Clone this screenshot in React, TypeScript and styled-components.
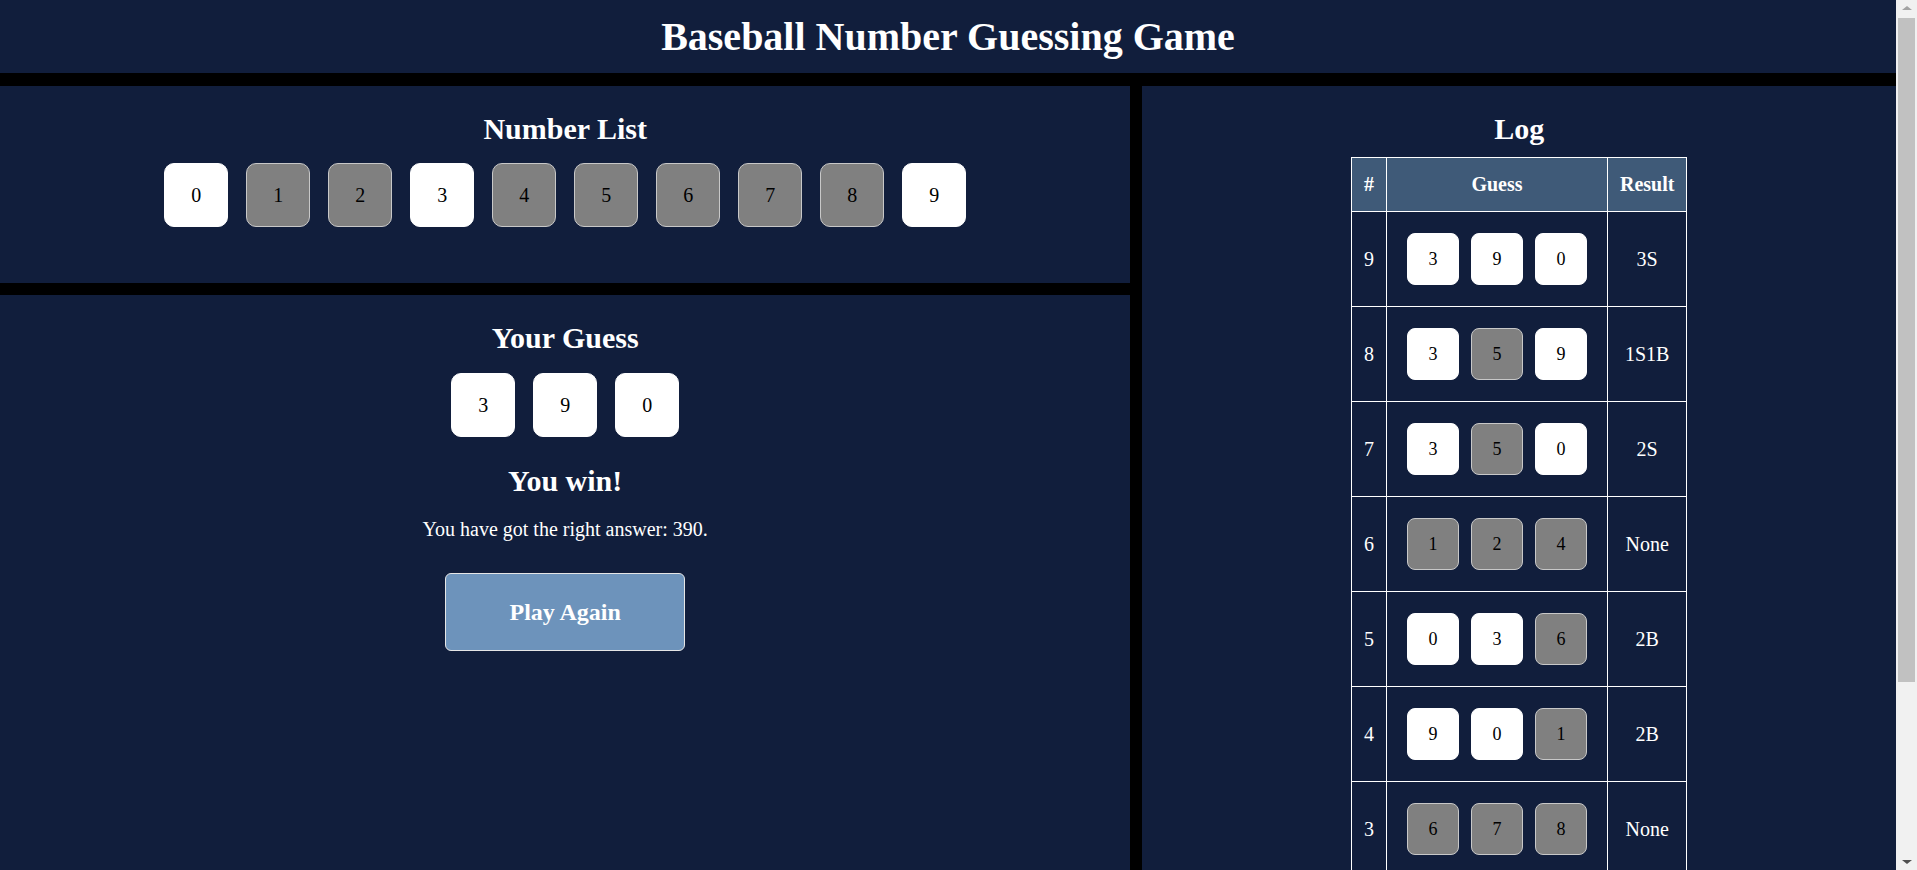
import React from 'react';
import styled, { createGlobalStyle } from 'styled-components';

const GlobalStyle = createGlobalStyle`
  body {
    margin: 0;
    background-color: #000;
    color: #fff;
    font-family: 'Liberation Serif', 'Times New Roman', serif;
  }
`;

const Page = styled.div`
  width: calc(100% - 21px);
`;

// stand-in for the browser's scrollbar seen in the screenshot
const ScrollTrack = styled.div`
  position: fixed;
  top: 0;
  right: 0;
  width: 21px;
  height: 100vh;
  display: flex;
  flex-direction: column;
  align-items: center;
  background-color: #f1f1f1;
`;

const ScrollArrow = styled.div<{ down?: boolean }>`
  width: 0;
  height: 0;
  margin: ${(p) => (p.down ? 'auto 0 6px' : '6px 0 0')};
  border-left: 5px solid transparent;
  border-right: 5px solid transparent;
  ${(p) =>
    p.down ? 'border-top: 4px solid #505050;' : 'border-bottom: 4px solid #a3a3a3;'}
`;

const ScrollThumb = styled.div`
  width: 17px;
  height: 664px;
  margin-top: 8px;
  background-color: #c1c1c1;
`;

const Header = styled.header`
  height: 73px;
  display: flex;
  justify-content: center;
  align-items: center;
  background-color: #111e3c;
  margin-bottom: 13px;
`;

const Title = styled.h1`
  margin: 0;
  font-size: 40px;
  font-weight: bold;
`;

const Main = styled.main`
  display: grid;
  grid-template-columns: 3fr 2fr;
  gap: 12px;
`;

const LeftColumn = styled.div`
  display: grid;
  grid-template-rows: 197px 1fr;
  gap: 12px;
`;

const Panel = styled.section`
  display: flex;
  flex-direction: column;
  align-items: center;
  background-color: #111e3c;
  padding: 26px 0 25px;
`;

const PanelTitle = styled.h2<{ gap?: number }>`
  margin: 0 0 ${(p) => p.gap ?? 18}px;
  font-size: 30px;
  line-height: 34px;
  font-weight: bold;
`;

const BoxRow = styled.div`
  display: flex;
  gap: 18px;
`;

const NumberBox = styled.div<{ used: boolean }>`
  box-sizing: border-box;
  width: 64px;
  height: 64px;
  display: flex;
  justify-content: center;
  align-items: center;
  border-radius: 10px;
  border: 1px solid ${(p) => (p.used ? '#fff' : '#c8c8c8')};
  background-color: ${(p) => (p.used ? '#fff' : '#808080')};
  color: #000;
  font-size: 20px;
`;

const WinTitle = styled.h2`
  margin: 27px 0 20px;
  font-size: 30px;
  line-height: 34px;
  font-weight: bold;
`;

const Message = styled.p`
  margin: 0 0 32px;
  font-size: 20px;
  line-height: 23px;
`;

const PlayButton = styled.button`
  box-sizing: border-box;
  width: 240px;
  height: 78px;
  border: 1px solid #e6e6e6;
  border-radius: 6px;
  background-color: #6d93bb;
  color: #fff;
  font-family: 'Liberation Serif', 'Times New Roman', serif;
  font-size: 24px;
  font-weight: bold;
  cursor: pointer;
`;

const LogTable = styled.table`
  border-collapse: collapse;
  font-size: 20px;
  margin-top: -7px;
`;

const HeadCell = styled.th`
  border: 1px solid #fff;
  padding: 15px 12px;
  background-color: #3f5a78;
  line-height: 23px;
`;

const Cell = styled.td<{ wide?: boolean }>`
  border: 1px solid #fff;
  padding: ${(p) => (p.wide ? '15px 14px' : '15px 12px')};
  text-align: center;
  line-height: 23px;
`;

const LogBoxes = styled.div`
  display: flex;
`;

const LogBox = styled.div<{ used: boolean }>`
  box-sizing: border-box;
  width: 52px;
  height: 52px;
  margin: 6px;
  display: flex;
  justify-content: center;
  align-items: center;
  border-radius: 8px;
  border: 1px solid ${(p) => (p.used ? '#fff' : '#c8c8c8')};
  background-color: ${(p) => (p.used ? '#fff' : '#808080')};
  color: #000;
  font-size: 18px;
`;

const answer = [3, 9, 0];

const history = [
  [3, 9, 0],
  [3, 5, 9],
  [3, 5, 0],
  [1, 2, 4],
  [0, 3, 6],
  [9, 0, 1],
  [6, 7, 8],
  [1, 2, 3],
  [4, 5, 6],
];

const judge = (guess: number[]) => {
  let strike = 0;
  let ball = 0;
  guess.forEach((n, i) => {
    if (answer[i] === n) strike++;
    else if (answer.includes(n)) ball++;
  });
  if (!strike && !ball) return 'None';
  return `${strike ? strike + 'S' : ''}${ball ? ball + 'B' : ''}`;
};

const App = () => {
  return (
    <Page>
      <GlobalStyle />
      <Header>
        <Title>Baseball Number Guessing Game</Title>
      </Header>
      <Main>
        <LeftColumn>
          <Panel>
            <PanelTitle gap={17}>Number List</PanelTitle>
            <BoxRow>
              {[0, 1, 2, 3, 4, 5, 6, 7, 8, 9].map((n) => (
                <NumberBox key={n} used={answer.includes(n)}>
                  {n}
                </NumberBox>
              ))}
            </BoxRow>
          </Panel>
          <Panel>
            <PanelTitle>Your Guess</PanelTitle>
            <BoxRow>
              {answer.map((n) => (
                <NumberBox key={n} used>
                  {n}
                </NumberBox>
              ))}
            </BoxRow>
            <WinTitle>You win!</WinTitle>
            <Message>You have got the right answer: {answer.join('')}.</Message>
            <PlayButton>Play Again</PlayButton>
          </Panel>
        </LeftColumn>
        <Panel>
          <PanelTitle>Log</PanelTitle>
          <LogTable>
            <thead>
              <tr>
                <HeadCell>#</HeadCell>
                <HeadCell>Guess</HeadCell>
                <HeadCell>Result</HeadCell>
              </tr>
            </thead>
            <tbody>
              {history.map((guess, i) => (
                <tr key={i}>
                  <Cell>{history.length - i}</Cell>
                  <Cell wide>
                    <LogBoxes>
                      {guess.map((n) => (
                        <LogBox key={n} used={answer.includes(n)}>
                          {n}
                        </LogBox>
                      ))}
                    </LogBoxes>
                  </Cell>
                  <Cell>{judge(guess)}</Cell>
                </tr>
              ))}
            </tbody>
          </LogTable>
        </Panel>
      </Main>
      <ScrollTrack>
        <ScrollArrow />
        <ScrollThumb />
        <ScrollArrow down />
      </ScrollTrack>
    </Page>
  );
};

export default App;
